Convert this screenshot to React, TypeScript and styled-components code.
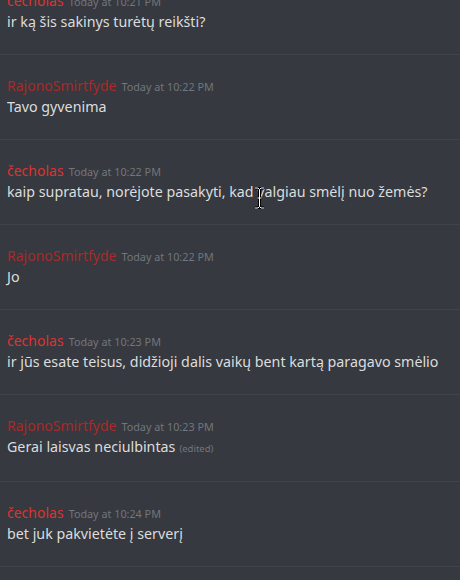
import styled, { createGlobalStyle } from "styled-components";

const GlobalStyle = createGlobalStyle`
  html, body {
    margin: 0;
    padding: 0;
    background: #36393f;
    overflow: hidden;
  }
  body {
    font-family: "Noto Sans", "Open Sans", sans-serif;
  }
`;

const Chat = styled.div`
  position: relative;
  width: 460px;
  height: 580px;
  overflow: hidden;
  background: #36393f;
`;

const List = styled.div`
  display: flex;
  flex-direction: column;
  margin-top: -30px;
`;

const Message = styled.div`
  border-bottom: 1px solid #40434a;
  padding: 21px 7px;
`;

const Header = styled.div`
  display: flex;
  align-items: baseline;
  gap: 5px;
  height: 20px;
  line-height: 20px;
`;

const Name = styled.span<{ $color: string }>`
  color: ${(p) => p.$color};
  font-size: 14px;
`;

const Time = styled.span`
  color: #72767d;
  font-size: 10.8px;
`;

const Text = styled.div`
  color: #dcddde;
  font-size: 14.25px;
  line-height: 22px;
  white-space: nowrap;
`;

const Edited = styled.span`
  color: #72767d;
  font-size: 9.5px;
  margin-left: 4px;
`;

const Cursor = styled.svg`
  position: absolute;
  left: 254px;
  top: 187px;
`;

type Msg = {
  author: "c" | "r";
  time: string;
  text: string;
  edited?: boolean;
};

const authors = {
  c: { name: "čecholas", color: "#dd3432" },
  r: { name: "RajonoSmirtfyde", color: "#a82a2a" },
};

const messages: Msg[] = [
  { author: "c", time: "10:21 PM", text: "ir ką šis sakinys turėtų reikšti?" },
  { author: "r", time: "10:22 PM", text: "Tavo gyvenima" },
  {
    author: "c",
    time: "10:22 PM",
    text: "kaip supratau, norėjote pasakyti, kad valgiau smėlį nuo žemės?",
  },
  { author: "r", time: "10:22 PM", text: "Jo" },
  {
    author: "c",
    time: "10:23 PM",
    text: "ir jūs esate teisus, didžioji dalis vaikų bent kartą paragavo smėlio",
  },
  { author: "r", time: "10:23 PM", text: "Gerai laisvas neciulbintas", edited: true },
  { author: "c", time: "10:24 PM", text: "bet juk pakvietėte į serverį" },
];

export default function App() {
  return (
    <Chat>
      <GlobalStyle />
      <List>
        {messages.map((m, i) => (
          <Message key={i}>
            <Header>
              <Name $color={authors[m.author].color}>{authors[m.author].name}</Name>
              <Time>Today at {m.time}</Time>
            </Header>
            <Text>
              {m.text}
              {m.edited && <Edited>(edited)</Edited>}
            </Text>
          </Message>
        ))}
      </List>
      <Cursor width="11" height="22" viewBox="0 0 11 22">
        <path
          d="M1 1h3l1.5 1.5L7 1h3M5.5 2.5v17M1 21h3l1.5-1.5L7 21h3M3.5 11h4"
          stroke="#000"
          strokeWidth="3"
          fill="none"
        />
        <path
          d="M1 1h3l1.5 1.5L7 1h3M5.5 2.5v17M1 21h3l1.5-1.5L7 21h3M3.5 11h4"
          stroke="#fff"
          strokeWidth="1"
          fill="none"
        />
      </Cursor>
    </Chat>
  );
}
